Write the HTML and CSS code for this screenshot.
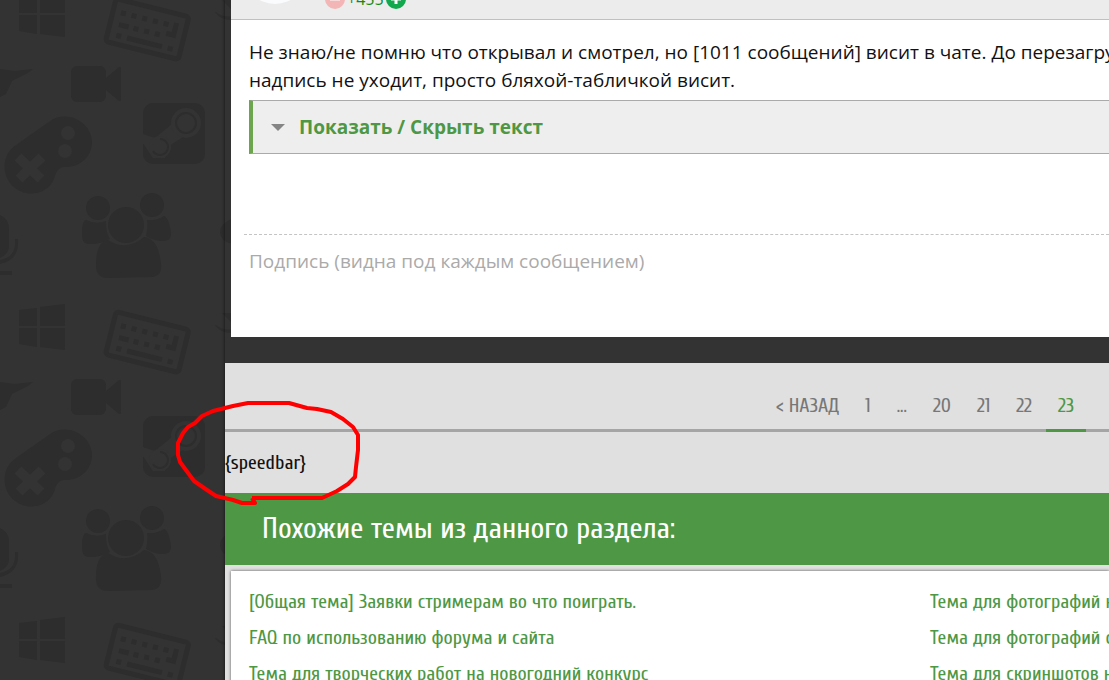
FILE: index.html
```html
<!DOCTYPE html>
<html lang="ru">
<head>
<meta charset="utf-8">
<title>Форум</title>
<link rel="stylesheet" href="styles.css">
</head>
<body>
<svg class="wallpaper" aria-hidden="true">
  <defs>
    <g id="motif" fill="#2d2d2d">
      <path d="M19 17l18-2v18H19zM40 14l25-3v22H40zM19 35h18v19l-18-3zM40 35h25v22l-25-3z" transform="translate(0 -20)"/>
      <g transform="translate(147 28) rotate(14)">
        <rect x="-37" y="-21" width="75" height="44" rx="3" fill="none" stroke="#2d2d2d" stroke-width="5"/>
        <path d="M-29-11h5v5h-5zm11 0h5v5h-5zm11 0h5v5h-5zm11 0h5v5h-5zm11 0h5v5h-5zM-28 1h10v5h-10zm15 0h5v5h-5zm11 0h5v5h-5zm11 0h5v5h-5zM25-12h5v15h-10v-5h5zM-28 12h5v5h-5zm11 0h36v5h-36zM25 12h5v5h-5z"/>
      </g>
      <path d="M0 69l15 2 18-2-5 4-16 8-6 13-6 3z"/>
      <rect x="71" y="66" width="35" height="36" rx="6"/>
      <path d="M106 78l13-11h2v34h-2l-13-11z"/>
      <rect x="143" y="103" width="62" height="61" rx="10"/>
      <path d="M143 134l12 4 17-14 11 13-14 9-4 12h-12l-10-15z" fill="#333"/>
      <circle cx="186" cy="123" r="15" fill="#333"/><circle cx="160" cy="147" r="11" fill="#333"/>
      <circle cx="186" cy="123" r="10" fill="none" stroke="#2d2d2d" stroke-width="2"/>
      <path d="M153 151a8 8 0 1 0 7-12" fill="none" stroke="#2d2d2d" stroke-width="2"/>
      <path d="M50 121c17-12 42 1 42 21 0 15-13 26-28 25-7 1-8 6-10 12-6 15-26 19-39 9-15-12-13-34 1-43z"/>
      <circle cx="68" cy="133" r="7" fill="#333"/><circle cx="65" cy="151" r="7" fill="#333"/>
      <path d="M18 157l23 22M42 157l-23 22" stroke="#333" stroke-width="10"/>
      <circle cx="98" cy="208" r="12"/><circle cx="152" cy="205" r="12"/><circle cx="126" cy="225" r="18"/>
      <path d="M86 220q10 5 20 1c0 8 1 13 4 18q-9 5-20 5c-6 0-8-3-8-10 0-8 1-13 4-14zM147 220q10 1 17-4c4 1 7 12 7 18 0 5-3 7-8 7q-9 0-17-5c1-5 2-10 1-16zM108 240q18 12 36-3c10 1 15 10 17 26 1 9-2 13-9 14l-44 1c-8 0-12-4-12-12 0-13 2-24 12-26z"/>
      <path d="M0 215q9 4 9 13v18q0 8-9 12zM15 239h3c1 15-5 22-18 25v-4c11-2 16-8 15-21zM0 271h12v4H0zM232 219q-12 4-12 13t12 12zM216 12q8 6 16 4v4q-12 0-17-8zM222 0h10v10z"/>
    </g>
  </defs>
  <use href="#motif"/>
  <use href="#motif" y="313"/>
  <use href="#motif" y="626"/>
</svg>
<main class="page">
  <article class="post">
    <header class="post-head">
      <span class="avatar"></span>
      <div class="rating">
        <button class="vote" aria-label="Минус"><svg viewBox="0 0 20 20"><circle cx="10" cy="10" r="10" fill="#f3b5b5"/><path d="M5 10h10" stroke="#fff" stroke-width="3"/></svg></button>
        <span>+455</span>
        <button class="vote" aria-label="Плюс"><svg viewBox="0 0 20 20"><circle cx="10" cy="10" r="10" fill="#12a84e"/><path d="M5 10h10M10 5v10" stroke="#fff" stroke-width="3"/></svg></button>
      </div>
    </header>
    <div class="post-body">
      <p>Не знаю/не помню что открывал и смотрел, но [1011 сообщений] висит в чате. До перезагру<br>надпись не уходит, просто бляхой-табличкой висит.</p>
      <button class="spoiler"><svg class="caret" viewBox="0 0 14 7"><path d="M0 0h14L7 7z"/></svg>Показать / Скрыть текст</button>
    </div>
    <footer class="signature">Подпись (видна под каждым сообщением)</footer>
  </article>
  <section class="below">
    <nav class="pager">
      <a href="#">&lt; НАЗАД</a><a href="#">1</a><span>...</span><a href="#">20</a><a href="#">21</a><a href="#">22</a><a href="#" class="current">23</a>
    </nav>
    <div class="speedbar">{speedbar}</div>
    <h2 class="title">Похожие темы из данного раздела:</h2>
    <div class="topics">
      <ul>
        <li><a href="#">[Общая тема] Заявки стримерам во что поиграть.</a></li>
        <li><a href="#">FAQ по использованию форума и сайта</a></li>
        <li><a href="#">Тема для творческих работ на новогодний конкурс</a></li>
      </ul>
      <ul>
        <li><a href="#">Тема для фотографий н</a></li>
        <li><a href="#">Тема для фотографий с</a></li>
        <li><a href="#">Тема для скриншотов н</a></li>
      </ul>
    </div>
  </section>
</main>
<svg class="marker" viewBox="0 0 190 110" aria-hidden="true"><path d="M78 89L81 94H68L59 91L42 87L33 81L20 72L6 53L4 46V34L9 24L14 18L21 14L28 7L39 2L59-3L74-6H115L133-1L143 0L157 3L169 10L179 18L184 26V41L182 58L181 68L174 75L163 82L148 89H78" transform="translate(0 10)"/></svg>
</body>
</html>
```
FILE: styles.css
```css
* { box-sizing: border-box; }
body {
  margin: 0;
  height: 100vh;
  overflow: hidden;
  position: relative;
  background: #333;
  color: #111;
  font-family: "Open Sans", "Noto Sans", sans-serif;
}
button { border: 0; padding: 0; background: none; font: inherit; }
a { color: inherit; text-decoration: none; }
.wallpaper { position: absolute; top: 0; left: 0; width: 232px; height: 100%; }
.page { position: relative; margin-left: 225px; box-shadow: 0 0 3px #111; }
.post { margin-left: 6px; background: #fff; }
.post-head {
  display: flex;
  align-items: flex-end;
  height: 20px;
  padding: 0 12px;
  background: #ececec;
  border-bottom: 1px solid #c0c0c0;
}
.avatar { width: 64px; height: 64px; margin-bottom: 15px; border-radius: 50%; background: #fafbfd; }
.rating {
  display: flex;
  align-items: center;
  gap: 2px;
  height: 20px;
  margin: 0 0 10px 18px;
  color: #128a12;
  font-size: 16px;
}
.vote, .vote svg { display: block; width: 20px; height: 20px; }
.post-body { padding: 18px 0 0 18px; font-size: 19px; line-height: 28px; }
.post-body p { margin: 0; white-space: nowrap; }
.spoiler {
  display: flex;
  align-items: center;
  gap: 14px;
  width: 100%;
  height: 54px;
  margin-top: 6px;
  padding-left: 18px;
  background: #eee;
  border: 1px solid #aaa;
  border-width: 1px 0;
  border-left: 4px solid #6da54e;
  color: #4e9744;
  font-weight: 700;
}
.caret { width: 14px; height: 7px; fill: #858585; }
.signature {
  margin: 80px 0 0 13px;
  padding: 12px 5px 62px;
  border-top: 1px dashed #c4c4c4;
  color: #aaa;
  font-size: 19px;
  line-height: 28px;
}
.below {
  margin-top: 26px;
  background: #e0e0e0;
  font-family: "Cuprum", "Liberation Sans Narrow", "Roboto Condensed", "Open Sans Condensed", Roboto, sans-serif;
  font-size: 20px;
}
.pager {
  display: flex;
  justify-content: flex-end;
  gap: 2px;
  height: 69px;
  padding: 18px 23px 0;
  border-bottom: 3px solid #a5a5a5;
  color: #777;
}
.pager > * { height: 51px; padding: 0 12px; line-height: 50px; }
.pager .current { color: #4e9744; border-bottom: 3px solid #4e9744; }
.speedbar { height: 61px; line-height: 61px; }
.title {
  margin: 0;
  padding: 0 37px;
  background: #4e9744;
  color: #fff;
  font-size: 30px;
  font-weight: 500;
  line-height: 72px;
}
.topics {
  display: grid;
  grid-template-columns: 681px 1fr;
  margin: 6px 0 0 6px;
  padding: 13px 0 20px 18px;
  background: #fff;
  box-shadow: 0 0 3px #555;
  color: #4e9744;
}
.topics ul { margin: 0; padding: 0; list-style: none; white-space: nowrap; }
.topics li { line-height: 36px; }
.marker {
  position: absolute;
  top: 399px;
  left: 174px;
  width: 190px;
  height: 110px;
  fill: none;
  stroke: #f00;
  stroke-width: 4;
  stroke-linejoin: round;
}
```
